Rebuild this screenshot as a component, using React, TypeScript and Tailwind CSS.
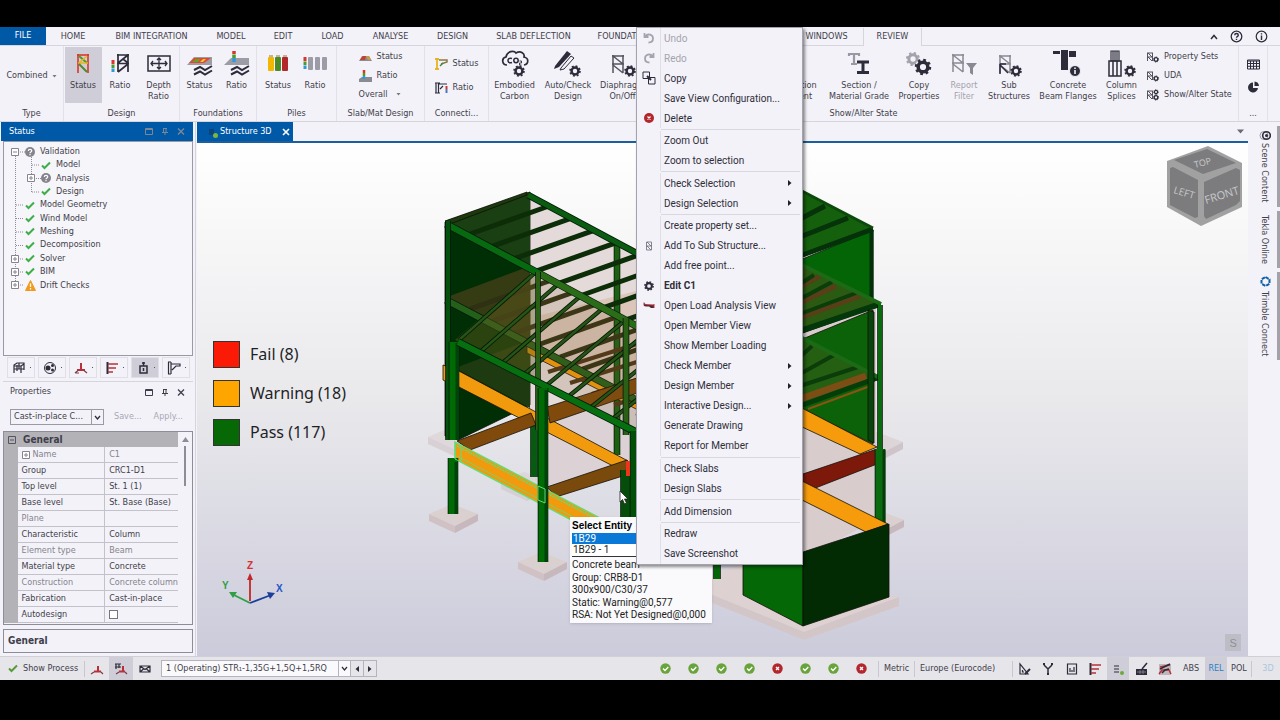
import React from "react";

const INK = "#2d2c3a";

function Gear({ x, y, s = 1, c = INK }: { x: number; y: number; s?: number; c?: string }) {
  return (
    <g transform={`translate(${x} ${y}) scale(${s})`} fill="none" stroke={c}>
      <circle r="3.6" strokeWidth="2.6" />
      <circle r="5.2" strokeWidth="1.8" strokeDasharray="2 2.084" />
    </g>
  );
}

function Svg({ w, h, children }: { w: number; h: number; children: React.ReactNode }) {
  return (
    <svg width={w} height={h} viewBox={`0 0 ${w} ${h}`} fill="none" stroke={INK} strokeWidth="1.5" aria-hidden="true" className="shrink-0">
      {children}
    </svg>
  );
}

const Truss = ({ x = 0, y = 0, c = INK }: { x?: number; y?: number; c?: string }) => (
  <path transform={`translate(${x} ${y})`} d="M1 0V18M11 0V18M0 1H12M0 9H12M1 1L11 9M1 10L11 18" stroke={c} />
);

const ICONS: Record<string, React.ReactNode> = {
  designStatus: (
    <Svg w={28} h={26}>
      <path d="M9 3V22M19 3V22" stroke="#d8362a" strokeWidth="1.600" />
      <path d="M8 4H20" stroke="#d8362a" strokeWidth="1.600" />
      <path d="M10 5L18 12" stroke="#4c9a2a" strokeWidth="2" />
      <path d="M18 5L10 12M9 12H19" stroke="#e8b51e" strokeWidth="1.600" />
      <path d="M10 13L18 21" stroke="#4c8a2a" strokeWidth="2" />
    </Svg>
  ),
  designRatio: (
    <Svg w={28} h={26}>
      <path d="M12 3V21M22 3V21M11 4H23M11 12.500H23M22 4L12 12M22 13L12 21M17 8L22 12" strokeWidth="1.700" />
      <path d="M7 9V13" stroke="#d8362a" strokeWidth="3" />
      <path d="M7 13.5V17" stroke="#4c9a2a" strokeWidth="3" />
      <path d="M7 17.5V21" stroke="#2f9ad8" strokeWidth="3" />
    </Svg>
  ),
  depth: (
    <Svg w={28} h={26}>
      <rect x="3" y="5" width="22" height="15" />
      <path d="M14 7V18M6 12.5H22M12 9L14 7L16 9M12 16L14 18L16 16M8 10L6 12.5L8 15M20 10L22 12.5L20 15" strokeWidth="1.3" />
    </Svg>
  ),
  fndStatus: (
    <Svg w={28} h={26}>
      <path d="M1 14L8 6H26V14Z" fill="#9c9ca6" stroke="none" />
      <path d="M3 12L8 7H25L18 12Z" fill="#dd4a2e" stroke="none" />
      <path d="M6 11L10 8H15L12 11Z" fill="#6aa028" stroke="none" />
      <path d="M14 11L17 8H20L17 11Z" fill="#f0c63a" stroke="none" />
      <path d="M8 19L14 16L19 19L26 15M8 23.500L14 20.500L19 23.500L26 19.500" strokeWidth="2" />
    </Svg>
  ),
  fndRatio: (
    <Svg w={28} h={26}>
      <path d="M1 14L8 7H26V14Z" fill="#9c9ca6" stroke="none" />
      <path d="M11 0V3" stroke="#d8362a" strokeWidth="3.500" />
      <path d="M11 3.500V7" stroke="#4c9a2a" strokeWidth="3.500" />
      <path d="M11 7V11" stroke="#2f9ad8" strokeWidth="3.500" />
      <path d="M8 19L14 16L19 19L26 15M8 23.500L14 20.500L19 23.500L26 19.500" strokeWidth="2" />
    </Svg>
  ),
  pileStatus: (
    <Svg w={28} h={26}>
      <rect x="4" y="6" width="6" height="14" rx="1" fill="#f2b705" stroke="none" />
      <rect x="11" y="6" width="6" height="14" rx="1" fill="#4a8a2a" stroke="none" />
      <rect x="18" y="6" width="6" height="14" rx="1" fill="#b3262b" stroke="none" />
      <path d="M5 5H9M12 5H16M19 5H23" stroke="#8b7a3a" strokeWidth="1" />
    </Svg>
  ),
  pileRatio: (
    <Svg w={28} h={26}>
      <path d="M4 6V10" stroke="#d8362a" strokeWidth="3" />
      <path d="M4 10.500V14" stroke="#4c9a2a" strokeWidth="3" />
      <path d="M4 14.500V18" stroke="#2f9ad8" strokeWidth="3" />
      <rect x="7" y="6" width="5" height="13" rx="1" fill="#9c9ca6" stroke="none" />
      <rect x="14" y="6" width="5" height="13" rx="1" fill="#9c9ca6" stroke="none" />
      <rect x="21" y="6" width="5" height="13" rx="1" fill="#9c9ca6" stroke="none" />
    </Svg>
  ),
  slabStatus: (
    <Svg w={14} h={12}>
      <path d="M0 10L3 5H10L13 10Z" fill="#8a8a92" stroke="none" />
      <path d="M1 9L4 5H7L6 9Z" fill="#c8402a" stroke="none" />
      <path d="M7 5L9 9L12 9L10 5Z" fill="#c89a4a" stroke="none" />
    </Svg>
  ),
  slabRatio: (
    <Svg w={14} h={12}>
      <path d="M0 12V9L3 7H13V12Z" fill="#8a8a92" stroke="none" />
      <path d="M5 0V3" stroke="#d8362a" strokeWidth="2.500" />
      <path d="M5 3V6" stroke="#4c9a2a" strokeWidth="2.500" />
      <path d="M5 6V9" stroke="#2f9ad8" strokeWidth="2.500" />
    </Svg>
  ),
  conStatus: (
    <Svg w={14} h={12}>
      <path d="M2 1V11M0 1H4M0 11H4" stroke="#e8b51e" strokeWidth="1.800" />
      <path d="M4 2H12V4L6 6" stroke="#8a7a4a" />
      <path d="M5 8L8 5" stroke="#3a8a3a" />
    </Svg>
  ),
  conRatio: (
    <Svg w={14} h={12}>
      <path d="M1 1V11M3.500 1V11M0 1H5M0 11H5M4 2H12M5 7L8 4" strokeWidth="1.200" />
      <path d="M11.500 4V7" stroke="#d8362a" strokeWidth="2" />
      <path d="M11.500 7V11" stroke="#4a7ab8" strokeWidth="2" />
    </Svg>
  ),
  carbon: (
    <Svg w={32} h={28}>
      <path d="M8 15C3 15 2 8 7 7C8 1 15 0 17 3C22 0 26 4 25 7C30 8 30 14 25 15" strokeWidth="1.700" />
      <path d="M13 8.500C10 7.500 9 9 9 10.500C9 12 10 13.500 13 12.500" strokeWidth="1.500" />
      <circle cx="17" cy="10.500" r="2.200" strokeWidth="1.500" />
      <path d="M20.500 11H22.500V13H20.500V15H22.500" strokeWidth="0.900" />
      <Gear x={20} y={21} s={0.95} />
    </Svg>
  ),
  autoCheck: (
    <Svg w={32} h={28}>
      <path d="M3 16L15 1L19 4L7 17L2 19Z" fill={INK} stroke="none" />
      <path d="M9 18L19 6L22 8L12 19L8 20Z" strokeWidth="1" fill="#f3f2f8" />
      <Gear x={23} y={21} s={0.95} />
    </Svg>
  ),
  diaphragm: (
    <Svg w={32} h={28}>
      <Truss x={5} y={5} c="#55545f" />
      <Gear x={23} y={21} s={0.95} />
    </Svg>
  ),
  section: (
    <Svg w={32} h={28}>
      <path d="M5 4H17M11 4V14M8 14H14M6 3V6M16 3V6" stroke="#9a99a3" strokeWidth="2.200" />
      <path d="M14 12H26M14 22.500H26M20 12V22" strokeWidth="3" />
    </Svg>
  ),
  copyProps: (
    <Svg w={32} h={28}>
      <Gear x={10} y={9} s={1.15} c="#a3a2ab" />
      <circle cx="20" cy="17" r="8" fill="#f3f2f8" stroke="none" />
      <Gear x={20} y={17} s={1.35} />
    </Svg>
  ),
  report: (
    <Svg w={32} h={28}>
      <Truss x={4} y={4} c="#8a8993" />
      <path d="M18 13H29L25 18V25L22 23V18Z" fill="#8a8993" stroke="none" />
    </Svg>
  ),
  sub: (
    <Svg w={32} h={28}>
      <Truss x={6} y={5} c="#8a8993" />
      <path d="M7 14V24M7 15L15 23M7 14H13" />
      <Gear x={23} y={21} s={0.95} />
    </Svg>
  ),
  flanges: (
    <Svg w={32} h={28}>
      <path d="M1 1H8V4H1ZM9 0H16V20H9ZM17 1H24V7H17Z" fill={INK} stroke="none" />
      <circle cx="23" cy="21" r="5.500" fill={INK} stroke="#f3f2f8" strokeWidth="1" />
      <path d="M23 20V24M23 17.500V19" stroke="#fff" strokeWidth="1.500" />
    </Svg>
  ),
  splices: (
    <Svg w={32} h={28}>
      <path d="M5 1H13V11H5ZM9 1V11M7 1V11M11 1V11" strokeWidth="1.200" />
      <path d="M3 11H15V26H3ZM7 11V26M11 11V26" strokeWidth="1.500" />
      <Gear x={24} y={21} s={0.95} />
    </Svg>
  ),
};

function MiniTruss({ double = false }: { double?: boolean }) {
  return (
    <Svg w={13} h={12}>
      <path d="M0.500 2V10M5.500 2V10M0 2H6M0 6H6M1 2L5 6M1 6L5 10" strokeWidth="1" stroke="#55545f" />
      {double && <Gear x={9} y={3} s={0.45} />}
      <Gear x={9} y={8.500} s={0.5} />
    </Svg>
  );
}

function Check({ className = "text-[#3fae49]" }: { className?: string }) {
  return (
    <svg width="10" height="9" viewBox="0 0 10 9" aria-hidden="true" className={`shrink-0 ${className}`}>
      <path d="M1 4.500L3.500 7L9 1.500" fill="none" stroke="currentColor" strokeWidth="2" />
    </svg>
  );
}

const TABS: [string, string][] = [
  ["HOME", "w-[54px]"], ["BIM INTEGRATION", "w-[103px]"], ["MODEL", "w-14"], ["EDIT", "w-12"], ["LOAD", "w-[51px]"],
  ["ANALYSE", "w-[65px]"], ["DESIGN", "w-[59px]"], ["SLAB DEFLECTION", "w-[103px]"], ["FOUNDATIONS", "w-[84px]"],
];

function Tabs() {
  return (
    <nav className="flex h-[19px] shrink-0 items-stretch border-b border-[#d6d5de] pt-px text-[9px]">
      <button className="-mt-px w-[46px] bg-[#0059a7] text-white">FILE</button>
      {TABS.map(([t, w]) => (
        <button key={t} className={`${w} whitespace-nowrap`}>{t}</button>
      ))}
      <div className="w-[121px]" />
      <button className="w-[73px]">WINDOWS</button>
      <button className="-mb-px w-[59px] border-x border-[#d6d5de] bg-[#f3f2f8]">REVIEW</button>
      <div className="ml-auto flex items-center gap-3 pr-3">
        <button aria-label="Collapse ribbon"><Svg w={8} h={6}><path d="M1 5L4 1.500L7 5" /></Svg></button>
        <button aria-label="Help">
          <Svg w={13} h={13}><circle cx="6.500" cy="6.500" r="5.300" strokeWidth="1.300" /><path d="M4.700 5.200C4.700 3 8.300 3 8.300 5.200C8.300 6.400 6.500 6.300 6.500 7.800M6.500 8.800V10" strokeWidth="1.400" /></Svg>
        </button>
        <button aria-label="About">
          <Svg w={13} h={13}><circle cx="6.500" cy="6.500" r="5.300" strokeWidth="1.200" /><path d="M6.500 5.500V10M6.500 3.200V4.500" strokeWidth="1.400" /></Svg>
        </button>
      </div>
    </nav>
  );
}

function Group({ label, w, children }: { label: string; w: string; children: React.ReactNode }) {
  return (
    <section className={`flex flex-col border-r border-[#e2e1ea] ${w}`}>
      <div className="flex h-[60px] justify-center pt-px">{children}</div>
      <h3 className="text-center leading-4 whitespace-nowrap">{label}</h3>
    </section>
  );
}

function Big({ icon, lines, w, active, dim }: { icon?: string; lines: string[]; w: string; active?: boolean; dim?: boolean }) {
  return (
    <button className={`flex h-14 shrink-0 flex-col items-center overflow-hidden ${w} ${active ? "bg-[#cfced8]" : ""} ${dim ? "text-[#a3a2ad]" : ""}`}>
      <span className="flex h-[33px] shrink-0 items-center justify-center">{icon && ICONS[icon]}</span>
      {lines.map((l) => (
        <span key={l} className="leading-[11px] whitespace-nowrap">{l}</span>
      ))}
    </button>
  );
}

function Small({ icon, label }: { icon?: React.ReactNode; label: string }) {
  return <button className="flex items-center gap-1 whitespace-nowrap">{icon}{label}</button>;
}

const Caret = () => <Svg w={5} h={3}><path d="M0.500 0H4.500L2.500 2.500Z" fill="#77767f" stroke="none" /></Svg>;

function Ribbon() {
  return (
    <div className="flex h-[76px] shrink-0 border-b border-[#d6d5de] text-[9px]">
      <Group label="Type" w="w-16">
        <button className="flex items-center gap-1">Combined <Caret /></button>
      </Group>
      <Group label="Design" w="w-[116px]">
        <Big icon="designStatus" lines={["Status"]} w="w-[37px]" active />
        <Big icon="designRatio" lines={["Ratio"]} w="w-[37px]" />
        <Big icon="depth" lines={["Depth", "Ratio"]} w="w-10" />
      </Group>
      <Group label="Foundations" w="w-[77px]">
        <Big icon="fndStatus" lines={["Status"]} w="w-[37px]" />
        <Big icon="fndRatio" lines={["Ratio"]} w="w-[37px]" />
      </Group>
      <Group label="Piles" w="w-20">
        <Big icon="pileStatus" lines={["Status"]} w="w-[37px]" />
        <Big icon="pileRatio" lines={["Ratio"]} w="w-[37px]" />
      </Group>
      <Group label="Slab/Mat Design" w="w-[88px]">
        <div className="flex flex-col justify-around pb-px">
          <Small icon={ICONS.slabStatus} label="Status" />
          <Small icon={ICONS.slabRatio} label="Ratio" />
          <button className="flex items-center gap-2">Overall <Caret /></button>
        </div>
      </Group>
      <Group label="Connecti..." w="w-16">
        <div className="flex flex-col justify-evenly">
          <Small icon={ICONS.conStatus} label="Status" />
          <Small icon={ICONS.conRatio} label="Ratio" />
        </div>
      </Group>
      <Group label="Show/Alter State" w="min-w-0 flex-1">
        <Big icon="carbon" lines={["Embodied", "Carbon"]} w="w-[51px]" />
        <Big icon="autoCheck" lines={["Auto/Check", "Design"]} w="w-14" />
        <Big icon="diaphragm" lines={["Diaphragm", "On/Off"]} w="w-[53px]" />
        <div className="flex-1" />
        <Big lines={["Deflection", "Content"]} w="w-[60px]" />
        <Big icon="section" lines={["Section /", "Material Grade"]} w="w-[66px]" />
        <Big icon="copyProps" lines={["Copy", "Properties"]} w="w-[54px]" />
        <Big icon="report" lines={["Report", "Filter"]} w="w-9" dim />
        <Big icon="sub" lines={["Sub", "Structures"]} w="w-[54px]" />
        <Big icon="flanges" lines={["Concrete", "Beam Flanges"]} w="w-16" />
        <Big icon="splices" lines={["Column", "Splices"]} w="w-[43px]" />
        <div className="flex w-[95px] flex-col justify-around pb-px pl-1">
          <Small icon={<MiniTruss />} label="Property Sets" />
          <Small icon={<MiniTruss />} label="UDA" />
          <Small icon={<MiniTruss double />} label="Show/Alter State" />
        </div>
      </Group>
      <Group label="..." w="mr-3 w-[29px]">
        <div className="flex flex-col justify-evenly">
          <button aria-label="Table">
            <Svg w={13} h={11}><path d="M0.500 1H12.500V10H0.500ZM0.500 2H12.500M0.500 4.500H12.500M0.500 7.300H12.500M3.500 2V10M6.500 2V10M9.500 2V10" strokeWidth="1" /></Svg>
          </button>
          <button aria-label="Chart">
            <Svg w={13} h={12}><path d="M6 1.500A5 5 0 1 0 11 7H6Z" fill={INK} stroke="none" /><path d="M7.500 0.500A5 5 0 0 1 12 5H7.500Z" fill={INK} stroke="none" /></Svg>
          </button>
        </div>
      </Group>
    </div>
  );
}

type Node = { t: string; d?: number; box?: string; i: "q" | "c" | "w" };
const TREE: Node[] = [
  { t: "Validation", box: "-", i: "q" }, { t: "Model", d: 1, i: "c" }, { t: "Analysis", d: 1, box: "+", i: "q" }, { t: "Design", d: 1, i: "c" },
  { t: "Model Geometry", i: "c" }, { t: "Wind Model", i: "c" }, { t: "Meshing", i: "c" }, { t: "Decomposition", i: "c" },
  { t: "Solver", box: "+", i: "c" }, { t: "BIM", box: "+", i: "c" }, { t: "Drift Checks", box: "+", i: "w" },
];

function ExpandBox({ sign }: { sign: string }) {
  return (
    <svg width="8" height="8" viewBox="0 0 8 8" aria-hidden="true" className="shrink-0">
      <path d={sign === "+" ? "M0.500 0.500H7.500V7.500H0.500ZM2 4H6M4 2V6" : "M0.500 0.500H7.500V7.500H0.500ZM2 4H6"} fill="#fff" stroke="#85848f" />
    </svg>
  );
}

function WindowButtons({ tone }: { tone: string }) {
  return (
    <div className={`flex items-center gap-2 ${tone}`}>
      <button aria-label="Maximise"><svg width="8" height="7" className="block"><path d="M0.500 0.500H7.500V6.500H0.500ZM0 1.500H8" fill="none" stroke="currentColor" /></svg></button>
      <button aria-label="Pin"><svg width="8" height="7" className="block"><path d="M2.500 0V4M5 0V4M1 4.500H7M4 4V7M2 0.500H6" fill="none" stroke="currentColor" /></svg></button>
      <button aria-label="Close"><svg width="8" height="7" className="block"><path d="M1 0.500L7 6.500M7 0.500L1 6.500" fill="none" stroke="currentColor" strokeWidth="1.300" /></svg></button>
    </div>
  );
}

const BOTTOM_TOOLS: { n: string; on?: boolean; g: React.ReactNode }[] = [
  { n: "Structure", g: <path d="M2 12V4L5 2H12V9M2 5H9V12M5 4V10M9 5L12 3M2 8H12M7 2V8" strokeWidth="1.200" /> },
  { n: "Groups", g: <><circle cx="7" cy="7" r="5.500" strokeWidth="1" /><circle cx="5" cy="7" r="2.500" fill={INK} stroke="none" /><circle cx="9.500" cy="4.500" r="1.500" fill={INK} stroke="none" /><circle cx="9.500" cy="9" r="1.500" fill={INK} stroke="none" /></> },
  { n: "Loading", g: <><path d="M3 9H11M7 2V8" stroke="#b8303a" strokeWidth="2" /><path d="M1 12L4 9.500M10 9.500L13 12M1 12H5" stroke="#7a4048" strokeWidth="1.200" /></> },
  { n: "Wind", g: <><path d="M2.500 1V13" strokeWidth="2" /><path d="M3 3H13M3 7H11M3 11H8" stroke="#b8303a" strokeWidth="1.400" /></> },
  { n: "Status", on: true, g: <><path d="M4 5H11V12H4Z" /><path d="M7.500 1V5M6 2H9M7.500 7V10" /></> },
  { n: "Connections", g: <path d="M1.500 1V13M4 1V13M1 1H4M1 13H4M4 3H13V5H9L5 9" strokeWidth="1.200" /> },
];

const PROPS: [string, string, boolean][] = [
  ["Name", "C1", true], ["Group", "CRC1-D1", false], ["Top level", "St. 1 (1)", false], ["Base level", "St. Base (Base)", false],
  ["Plane", "", true], ["Characteristic", "Column", false], ["Element type", "Beam", true], ["Material type", "Concrete", false],
  ["Construction", "Concrete column", true], ["Fabrication", "Cast-in-place", false], ["Autodesign", "", false],
];

function LeftPanel() {
  return (
    <aside className="flex w-[196px] shrink-0 flex-col border-r border-[#d6d5de] pr-0.5 pl-[3px] text-[9px]">
      <div className="-ml-0.5 flex h-[19px] items-center justify-between bg-[#0059a7] pr-2 pl-2 text-white">
        <h2>Status</h2>
        <WindowButtons tone="text-[#7e8796]" />
      </div>
      <div className="h-[215px] border border-[#9a99a5] bg-[#f6f5fa] pt-[3px]">
        <ul className="relative grid h-[147px] auto-rows-fr">
          <svg width="40" height="147" className="absolute top-0 left-0" aria-hidden="true">
            <path d="M11.500 7V140M27.500 12V47M12 7H22M28 20H36M28 33.500H38M28 47H36M12 60H20M12 73.500H20M12 87H20M12 100.500H20M12 114H20M12 127H20M12 140H20" fill="none" stroke="#8d8c98" strokeDasharray="1 1" />
          </svg>
          {TREE.map((n) => (
            <li key={n.t} className={`relative flex items-center whitespace-nowrap ${n.d ? "pl-[23px]" : "pl-[7px]"}`}>
              <span className="flex w-[14px] shrink-0">{n.box && <ExpandBox sign={n.box} />}</span>
              <span className="flex w-[15px] shrink-0">
                {n.i === "c" && <Check />}
                {n.i === "q" && (
                  <svg width="10" height="10" viewBox="0 0 10 10" aria-hidden="true"><circle cx="5" cy="5" r="5" fill="#85848c" /><path d="M3.300 4C3.300 1.800 6.700 1.800 6.700 4C6.700 5 5 5 5 6.200M5 7V8.300" fill="none" stroke="#fff" strokeWidth="1.200" /></svg>
                )}
                {n.i === "w" && (
                  <svg width="11" height="11" viewBox="0 0 11 11" aria-hidden="true"><path d="M5.500 0.500L10.500 10.500H0.500Z" fill="#f39a1d" stroke="#f39a1d" strokeLinejoin="round" /><path d="M5.500 3.500V7M5.500 8V9.500" stroke="#fff" strokeWidth="1.300" /></svg>
                )}
              </span>
              {n.t}
            </li>
          ))}
        </ul>
      </div>
      <div className="flex h-[26px] items-start gap-[3px] border-b border-[#d6d5de] pt-px pl-1">
        {BOTTOM_TOOLS.map((b) => (
          <button key={b.n} aria-label={b.n} className={`flex h-[21px] w-7 items-center justify-center gap-1 border border-[#e0dfe8] ${b.on ? "bg-[#cfced8]" : ""}`}>
            <Svg w={14} h={14}>{b.g}</Svg>
            <span className="size-px bg-[#55545f]" />
          </button>
        ))}
      </div>
      <div className="flex h-5 items-center justify-between pr-2 pl-[7px]">
        <h2>Properties</h2>
        <WindowButtons tone="text-[#3f3e4b]" />
      </div>
      <div className="flex items-center pt-[7px] pb-[6px] pl-[7px]">
        <div className="flex h-4 w-[94px] shrink-0 border border-[#9a99a5]">
          <select aria-label="Property set" className="min-w-0 flex-1 appearance-none truncate bg-transparent pl-[3px]"><option>Cast-in-place C...</option></select>
          <span className="flex w-3 items-center justify-center border-l border-[#9a99a5]"><Svg w={7} h={5}><path d="M1 1L3.500 4L6 1" strokeWidth="1.300" /></Svg></span>
        </div>
        <button className="ml-[10px] text-[#a9a8b3]">Save...</button>
        <button className="ml-3 text-[#a9a8b3]">Apply...</button>
      </div>
      <div className="flex h-[194px] overflow-hidden border border-[#8d8c98]">
        <table className="h-[191px] flex-1 table-fixed border-collapse leading-[11px]">
          <tbody>
            <tr className="bg-[#b3b2b6]">
              <th colSpan={3} className="p-0 pt-px text-left text-[10px]"><span className="flex items-center gap-[7px] pl-1"><svg width="8" height="8"><path d="M0.500 0.500H7.500V7.500H0.500ZM2 4H6" fill="none" stroke="#55545f" /></svg>General</span></th>
            </tr>
            {PROPS.map(([k, v, dim]) => (
              <tr key={k} className={dim ? "text-[#85848f]" : ""}>
                <td className="w-[14px] bg-[#b3b2b6] p-0" />
                <th scope="row" className="w-[88px] border-r border-b border-[#c3c2ca] p-0 pt-px pl-1 text-left font-normal">
                  <span className="flex items-center gap-[3px]">{k === "Name" && <ExpandBox sign="+" />}{k}</span>
                </th>
                <td className="border-b border-[#c3c2ca] p-0 pt-px pl-1 whitespace-nowrap">
                  {k === "Autodesign" ? <input type="checkbox" aria-label="Autodesign" className="block size-[9px] appearance-none border border-[#77767f] bg-white" /> : v}
                </td>
              </tr>
            ))}
          </tbody>
        </table>
        <div className="flex w-[14px] shrink-0 flex-col items-center gap-1 pt-[5px]">
          <svg width="7" height="5"><path d="M0 5L3.500 0L7 5Z" fill="#8d8c98" /></svg>
          <div className="h-10 w-0.5 bg-[#8d8c98]" />
        </div>
      </div>
      <div className="mt-1 h-6 border border-[#8d8c98] px-1 pt-[5px] text-[10px] leading-3 font-bold">General</div>
    </aside>
  );
}

const O = "#120f08";

function Poly({ p, f, s = O, o = 1, w = 0.8 }: { p: string; f: string; s?: string; o?: number; w?: number }) {
  return <polygon points={p} fill={f} stroke={s} strokeWidth={w} opacity={o} />;
}

function Bar({ a, b, w, f }: { a: [number, number]; b: [number, number]; w: number; f: string }) {
  return (
    <>
      <line x1={a[0]} y1={a[1]} x2={b[0]} y2={b[1]} stroke="#04180a" strokeWidth={w + 1.6} />
      <line x1={a[0]} y1={a[1]} x2={b[0]} y2={b[1]} stroke={f} strokeWidth={w} />
    </>
  );
}

function Footing({ x, y, o = 1 }: { x: number; y: number; o?: number }) {
  return (
    <g opacity={o}>
      <path d={`M${x - 24} ${y}L${x - 1} ${y - 10}L${x + 25} ${y}L${x + 2} ${y + 12}Z`} fill="#dbd0d0" />
      <path d={`M${x - 24} ${y}L${x + 2} ${y + 12}V${y + 19}L${x - 24} ${y + 7}Z`} fill="#cfc1c4" />
      <path d={`M${x + 2} ${y + 12}L${x + 25} ${y}V${y + 7}L${x + 2} ${y + 19}Z`} fill="#c6b8bd" />
    </g>
  );
}

function Model() {
  const range = (n: number) => Array.from({ length: n }, (_, i) => i);
  return (
    <svg width="1051" height="512" viewBox="197 143 1051 512" className="block" role="img" aria-label="Structure 3D model">
      <Footing x={452} y={437} o={0.55} />
      <Footing x={525} y={482} o={0.5} />
      <Footing x={608} y={352} o={0.3} />
      <Footing x={604} y={455} o={0.4} />
      <Footing x={453} y={514} />
      <Footing x={542} y={562} />
      <Footing x={878} y={442} o={0.7} />
      <Footing x={879} y={520} />

      <Poly p="528,194 640,255 640,430 530,410" f="#e4dad9" s="none" />
      <Poly p="541,315 640,290 640,400 541,345" f="#dcc6ba" s="none" />
      <Poly p="535,412 640,380 640,470 560,496 535,480" f="#dcd2d5" s="none" />
      <Poly p="445,222 530,192 530,405 458,440 445,436" f="#012f05" />
      <Poly p="445,221 530,192 530,268" f="#1a3f12" s="none" />
      <Poly p="447,297 530,266 530,340" f="#353b13" s="none" />
      <Poly p="455,368 530,340 530,408" f="#1e3a10" s="none" />

      <Bar a={[534, 424]} b={[534, 477]} w={6} f="#075b10" />
      <Bar a={[617, 242]} b={[617, 455]} w={5} f="#1c6112" />
      <Poly p="527,344 640,401 640,411 527,353" f="#f59b0c" />
      {range(6).map((i) => (
        <line key={i} x1={470 + i * 22.5} y1={309 + i * 12} x2={549 + i * 22.5} y2={281 + i * 12} stroke="#2f3014" strokeWidth="5" />
      ))}
      {range(5).map((i) => (
        <line key={i} x1={548 + i * 22} y1={372 + i * 11} x2={640} y2={343 + i * 18} stroke="#4c3517" strokeWidth="4" />
      ))}
      <Bar a={[446, 300]} b={[640, 402]} w={6} f="#23601a" />
      {range(8).map((i) => (
        <line key={i} x1={470 + i * 22.5} y1={234 + i * 12.2} x2={549 + i * 22.5} y2={206 + i * 12.2} stroke="#0c2d08" strokeWidth="5" />
      ))}
      <Bar a={[528, 195]} b={[640, 255]} w={5} f="#0a5c10" />
      <Poly p="445,221 527,192 527,195 450,224" f="#1b3b0f" />

      <Poly p="443,365 457,370 457,387 443,380" f="#f59b0c" />
      <Poly p="457,370 628,461 613,466 457,386" f="#f29a0d" />
      <Poly p="547,407 640,377 640,392 550,423" f="#7f4a0b" />
      <Poly p="457,441 531,413 536,425 470,450" f="#7f4a0b" />
      <Poly p="547,487 627,460 626,475 556,497" f="#7a4a0c" />

      <Poly p="535,270 640,327 640,434 455,340" f="#7a5a28" s="none" o={0.16} />
      <Poly p="535,270 535,382 455,340" f="#5a5f1c" s="none" o={0.32} />
      {range(8).map((i) => (
        <Bar key={i} a={[537 + i * 22.3, 271 + i * 12.1]} b={[459 + i * 22, 340 + i * 11.2]} w={2.6} f="#265415" />
      ))}
      <Bar a={[446, 224]} b={[540, 274]} w={6} f="#086a10" />
      <Bar a={[540, 274]} b={[640, 328]} w={6} f="#2a6c18" />
      <Bar a={[538, 272]} b={[538, 430]} w={4} f="#2a6016" />
      <Bar a={[626, 318]} b={[626, 435]} w={5} f="#2a6016" />
      <Bar a={[448, 221]} b={[448, 440]} w={4} f="#04500c" />
      <Bar a={[626, 470]} b={[626, 530]} w={10} f="#064d0b" />

      <Poly p="455,442 640,539 640,556 455,459" f="#f29a0d" s="#63dd78" w={1.4} />
      <path d="M457 446L640 542" stroke="#63dd78" strokeWidth="1.500" fill="none" strokeDasharray="2 1" />
      <path d="M457 456L640 552" stroke="#63dd78" strokeWidth="0.800" fill="none" />
      <Bar a={[454, 342]} b={[454, 440]} w={9} f="#006a04" />
      <Bar a={[453, 458]} b={[453, 514]} w={9} f="#006a04" />
      <path d="M457 343V440M456 462V514" stroke="#01420a" strokeWidth="3" />
      <Bar a={[458, 342]} b={[640, 434]} w={6} f="#067010" />
      <Bar a={[543, 388]} b={[543, 562]} w={9} f="#006a04" />
      <path d="M546 390V562" stroke="#01420a" strokeWidth="3" />
      <path d="M538 486V500L545 503V489Z" stroke="#63dd78" fill="none" />
      <path d="M455 442V459L461 462V446Z" stroke="#63dd78" fill="none" />
      <Bar a={[634, 431]} b={[634, 530]} w={7} f="#025008" />
      <path d="M628 461V476" stroke="#f0341c" strokeWidth="4" />

      <Poly p="800,272 876,305 876,520 800,560" f="#d8cccd" s="none" />
      <Poly p="800,190 873,228 800,257" f="#15600d" />
      <path d="M800 219L825 206M800 237L848 218" stroke="#06330a" strokeWidth="5" />
      <Poly p="800,260 873,230 873,301 800,266" f="#036505" />
      <path d="M800 256L873 229" stroke="#04300a" strokeWidth="5" />
      <path d="M800 190L873 228" stroke="#0b4a0c" strokeWidth="3" />
      <path d="M871.500 230V302" stroke="#02300a" strokeWidth="4" />
      <Poly p="800,340 873,310 873,444 800,408" f="#0c6208" />
      <Poly p="800,264 881,305 800,334" f="#2b5b13" />
      <path d="M800 287L820 276M800 303L836 286M800 318L860 296" stroke="#583f17" strokeWidth="5" />
      <path d="M800 284L814 275M800 299L832 282M800 314L856 293" stroke="#0b3d0b" strokeWidth="4" />
      <path d="M800 331L880 304" stroke="#04380a" strokeWidth="6" />
      <path d="M800 264L881 304" stroke="#1d6a16" strokeWidth="4" />
      <Poly p="800,337 880,379 800,406" f="#245f12" />
      <path d="M800 357L812 346M800 374L834 355M800 386L858 367" stroke="#0b3d0b" strokeWidth="4" />
      <path d="M800 399L866 376" stroke="#7c4d14" strokeWidth="7" />
      <path d="M800 406L877 378" stroke="#043d0a" strokeWidth="5" />
      <path d="M800 337L880 378" stroke="#1d6a16" strokeWidth="4" />
      <path d="M808 409L873 385" stroke="#8b5313" strokeWidth="2" />
      <Poly p="800,407 877,447 860,454 800,426" f="#f59b0c" />
      <Poly p="800,475 877,449 877,464 800,494" f="#7d190b" />
      <Poly p="868,310 874,312 874,443 868,440" f="#09450a" />
      <Bar a={[880, 305]} b={[880, 450]} w={4} f="#0b6a10" />
      <Bar a={[880, 449]} b={[880, 526]} w={9} f="#0a6a10" />
      <path d="M884 450V524" stroke="#033d08" strokeWidth="3" />
      <Poly p="800,480 888,524 866,532 800,499" f="#f59b0c" />
      <Poly p="700,580 743,563 889,597 899,596 899,606 804,640 700,588" f="#ddd1d1" s="none" />
      <path d="M700 590L804 632L899 597V606L804 640L700 598Z" fill="#d3c6c8" />
      <Poly p="743,540 803,552 803,626 743,595" f="#036805" />
      <Poly p="803,552 889,524 889,597 803,626" f="#022b04" />
      <Bar a={[717, 540]} b={[717, 579]} w={6} f="#056509" />

      <g strokeWidth="1.800" fill="none">
        <path d="M250 601V577" stroke="#c02828" /><path d="M250 603L232 594" stroke="#2ea043" /><path d="M250 603L271 595" stroke="#1c3f9c" />
      </g>
      <path d="M247 580L250 573L253 580Z" fill="#c02828" />
      <path d="M229 592L237 592L233 598Z" fill="#2ea043" />
      <path d="M275 593L267 592L270 599Z" fill="#1c3f9c" />
      <g fontFamily="'Liberation Sans', sans-serif" fontSize="10" fontWeight="bold">
        <text x="247" y="569" fill="#d83030">Z</text>
        <text x="222" y="589" fill="#2ea043">Y</text>
        <text x="276" y="592" fill="#2456c8">X</text>
      </g>

      <path d="M1208 146L1242 163V207L1201 226L1167 207V161Z" fill="#a1a1a2" />
      <path d="M1207 149L1236 163L1203 174L1174 160Z" fill="#7c7c7e" />
      <path d="M1170 168L1173 167L1198 180V217L1195 218L1170 205Z" fill="#7c7c7e" />
      <path d="M1204 182L1236 168L1240 170V201L1236 205L1206 219L1204 216Z" fill="#7c7c7e" />
      <g fill="#c9c9cb" fontFamily="'Open Sans', sans-serif" fontSize="11">
        <text x="1195" y="168" fontSize="9" transform="rotate(-14 1195 168)">TOP</text>
        <text x="1173" y="193" fontSize="10" transform="rotate(16 1173 193)">LEFT</text>
        <text x="1206" y="204" transform="rotate(-17 1206 204)">FRONT</text>
      </g>
      <rect x="1225" y="634" width="16" height="17" fill="#bdbdc6" />
      <text x="1229.500" y="647" fontFamily="'Liberation Sans', sans-serif" fontSize="11" fill="#8f8f9b">S</text>
    </svg>
  );
}

const LEGEND: [string, string][] = [["Fail (8)", "bg-[#fb1a05]"], ["Warning (18)", "bg-[#ffa500]"], ["Pass (117)", "bg-[#066906]"]];

function EntityTip() {
  return (
    <div className="absolute top-[374px] left-[373px] w-[142px] bg-[#fafafc] px-0.5 pt-0.5 pb-px font-['Roboto',sans-serif] text-[10px] leading-[12.500px] text-[#222] shadow-sm">
      <h3 className="font-['Liberation_Sans',sans-serif] text-[10px] leading-[13px] font-bold text-black">Select Entity</h3>
      <ul className="border-b border-[#333] leading-[11px] whitespace-nowrap">
        <li className="mt-px bg-[#0a78d6] px-px text-white">1B29</li>
        <li className="bg-white px-px pb-px">1B29 - 1</li>
      </ul>
      <div className="mt-[2px] whitespace-nowrap">
        <p>Concrete beam</p><p>Group: CRB8-D1</p><p>300x900/C30/37</p><p>Static: Warning@0,577</p><p>RSA: Not Yet Designed@0,000</p>
      </div>
    </div>
  );
}

function Viewport() {
  return (
    <main className="flex min-w-0 flex-1 flex-col pl-px">
      <div className="flex h-[19px] shrink-0 items-center justify-between">
        <div className="flex h-full items-center bg-[#0059a7] pr-[3px] pl-2 text-[9px] text-white">
          <svg width="15" height="12" aria-hidden="true"><path d="M4 3H9V9H4Z" fill="#0d447c" /><circle cx="10.500" cy="9.500" r="2.500" fill="#7cb63a" /></svg>
          Structure 3D
          <button aria-label="Close tab" className="ml-2.5"><svg width="8" height="8" className="block"><path d="M1 1L7 7M7 1L1 7" stroke="#fff" strokeWidth="1.600" /></svg></button>
        </div>
        <button aria-label="Open views" className="mr-1"><svg width="7" height="5" className="block"><path d="M0 0.500H7L3.500 4.500Z" fill="#6a6975" /></svg></button>
      </div>
      <div className="relative min-h-0 flex-1 overflow-hidden border-t-2 border-[#1c5f9c] bg-linear-to-b from-white via-[#e9e9ec] to-[#cccbdb]">
        <Model />
        <ul className="absolute top-[198px] left-4 flex flex-col gap-3 font-['Noto_Sans',sans-serif] text-[16px] text-[#1f1f28]">
          {LEGEND.map(([t, c]) => (
            <li key={t} className="flex items-center gap-[10px]">
              <span className={`size-[27px] border border-[#333] ${c}`} />
              <span className="leading-[27px]">{t}</span>
            </li>
          ))}
        </ul>
        <EntityTip />
        <svg width="10" height="15" viewBox="0 0 10 15" className="absolute top-[347px] left-[422px]" aria-hidden="true"><path d="M1 1V12L3.500 9.500L5.500 14L7.500 13L5.500 9H9Z" fill="#fff" stroke="#222" strokeWidth="0.800" /></svg>
      </div>
    </main>
  );
}

function SideTabs() {
  const tab = "flex items-center border-r-[3px] border-[#a3a2a8] pr-1 [writing-mode:vertical-rl] whitespace-nowrap leading-4";
  return (
    <nav className="flex w-8 shrink-0 flex-col items-end gap-1 pt-1 text-[9px]">
      <button className={`${tab} h-[81px] justify-start gap-0.5 pt-1`}>
        <svg width="12" height="11" className="shrink-0"><circle cx="5" cy="5.500" r="4" fill="none" stroke="#9a99a5" /><circle cx="7.500" cy="5.500" r="3.800" fill="none" stroke={INK} strokeWidth="1.600" /><circle cx="7.500" cy="5.500" r="1.500" fill={INK} /></svg>
        Scene Content
      </button>
      <button className={`${tab} h-[57px] justify-center`}>Tekla Online</button>
      <button className={`${tab} h-[88px] justify-start gap-1 pt-1`}>
        <svg width="11" height="11" className="shrink-0"><path d="M5.500 1L9.500 3.300V7.700L5.500 10L1.500 7.700V3.300Z" fill="none" stroke="#0f5fa8" strokeWidth="2" strokeDasharray="3.600 1" /></svg>
        Trimble Connect
      </button>
    </nav>
  );
}

type Item = { t: string; i?: string; dim?: boolean; bold?: boolean; sub?: boolean };
const MENU: Item[][] = [
  [{ t: "Undo", i: "undo", dim: true }, { t: "Redo", i: "redo", dim: true }, { t: "Copy", i: "copy" }, { t: "Save View Configuration..." }, { t: "Delete", i: "del" }],
  [{ t: "Zoom Out" }, { t: "Zoom to selection" }],
  [{ t: "Check Selection", sub: true }, { t: "Design Selection", sub: true }],
  [
    { t: "Create property set..." }, { t: "Add To Sub Structure...", i: "subs" }, { t: "Add free point..." }, { t: "Edit C1", i: "gear", bold: true },
    { t: "Open Load Analysis View", i: "load" }, { t: "Open Member View" }, { t: "Show Member Loading" }, { t: "Check Member", sub: true },
    { t: "Design Member", sub: true }, { t: "Interactive Design...", sub: true }, { t: "Generate Drawing" }, { t: "Report for Member" },
  ],
  [{ t: "Check Slabs" }, { t: "Design Slabs" }],
  [{ t: "Add Dimension" }],
  [{ t: "Redraw" }, { t: "Save Screenshot" }],
];

const MENU_ICONS: Record<string, React.ReactNode> = {
  undo: <path d="M2.500 2V6H6.500M3 5.500C6 2 11 3.500 11 7.500C11 10 9 11.500 6.500 11.500" stroke="#a5a4ae" strokeWidth="1.800" />,
  redo: <path d="M11.500 2V6H7.500M11 5.500C8 2 3 3.500 3 7.500C3 10 5 11.500 7.500 11.500" stroke="#a5a4ae" strokeWidth="1.800" />,
  copy: <><path d="M1 1H7.500V7.500H1ZM6.500 6.500H13V13H6.500Z" strokeWidth="1" /><path d="M5 5L9 9" strokeWidth="2" /></>,
  del: <><circle cx="7" cy="7" r="5" fill="#b3262b" stroke="none" /><path d="M5.500 5.500L8.500 8.500M8.500 5.500L5.500 8.500" stroke="#fff" strokeWidth="1.200" /></>,
  subs: <path d="M4.500 3H9.500V11H4.500ZM4.500 7H9.500M5 3L9 7M5 7L9 11" strokeWidth="0.800" stroke="#6a6975" />,
  gear: <Gear x={7} y={7} s={0.8} />,
  load: <><path d="M2 4L5 6H12V9H9L7 7.500H4L2 7Z" fill="#4a2a35" stroke="none" /><path d="M2 3.500V6.500M3 5.500L12 6M12 5V9" stroke="#c0323c" strokeWidth="1" /></>,
};

function ContextMenu() {
  return (
    <div role="menu" className="absolute top-[27px] left-[636px] flex h-[538px] w-[167px] flex-col justify-between border border-[#a3a2ad] bg-[#f3f2f8] font-['Roboto',sans-serif] text-[10px] text-[#2f2e3a] shadow-[2px_2px_3px_rgba(0,0,0,0.45)]">
      {MENU.map((sec, k) => (
        <React.Fragment key={sec[0].t}>
          {k > 0 && <hr className="mr-0.5 ml-6 border-[#d9d8e1]" />}
          <div>
            {sec.map((m) => (
              <button key={m.t} role="menuitem" className={`flex h-5 w-full items-center text-left ${m.dim ? "text-[#a5a4ae]" : ""} ${m.bold ? "font-bold" : ""}`}>
                <span className="flex h-5 w-6 shrink-0 items-center justify-center border-r border-[#e0dfe8]">{m.i && <Svg w={14} h={14}>{MENU_ICONS[m.i]}</Svg>}</span>
                <span className="flex-1 pl-[3px] whitespace-nowrap">{m.t}</span>
                {m.sub && <svg width="4" height="8" className="mr-2.5" aria-hidden="true"><path d="M0 1L3.500 4L0 7Z" fill="#222" /></svg>}
              </button>
            ))}
          </div>
        </React.Fragment>
      ))}
    </div>
  );
}

const Sep = () => <span className="h-4 w-px shrink-0 bg-[#c9c8d2]" />;

const STATUS_TOOLS: { n: string; on?: boolean; g: React.ReactNode }[] = [
  { n: "Slope", g: <><path d="M2 2V12H10L2 2ZM4.500 8V10H6" strokeWidth="1.200" /><path d="M7 12L12 7" strokeWidth="2" /></> },
  { n: "Branch", g: <><path d="M3 3L7 7L11 3M7 7V12" /><path d="M2 1H4V3H2ZM10 1H12V3H10ZM6 11H8V13H6Z" fill={INK} stroke="none" /></> },
  { n: "Report", g: <path d="M2.500 2H11.500V12H2.500ZM5 6V10M7 8V10M9 5V10" strokeWidth="1.200" /> },
  { n: "Loads", g: <><path d="M2.500 1V13" strokeWidth="2" /><path d="M3 3H13M3 7H11M3 11H8" stroke="#b8303a" strokeWidth="1.300" /></> },
  { n: "Levels", on: true, g: <><path d="M3 4H8M3 7H8M3 10H8" strokeWidth="1.200" /><circle cx="11" cy="11" r="2" fill="#6fa83a" stroke="none" /></> },
  { n: "Grid", g: <><path d="M1 7H12V13H1Z" fill={INK} stroke="none" /><path d="M2 10H11M5 8V12M8 8V12" stroke="#9a99a5" strokeWidth="0.700" /><path d="M7 7L12 1" strokeWidth="1.500" /></> },
  { n: "Results", g: <><rect x="1" y="2" width="12" height="11" fill="#bfb6ba" stroke="none" /><path d="M1 12L4 8H11L13 12M2 5L12 3" stroke="#b8303a" /><path d="M2 7L6 5L12 2M4 11L7 8L11 7" /></> },
];

function StatusBar() {
  return (
    <footer className="flex h-6 shrink-0 items-center border-t border-[#d0cfd8] bg-[#e6e5ea] text-[9px] whitespace-nowrap">
      <span className="flex w-[84px] items-center gap-[5px] pl-2"><Check className="text-[#5a9a3a]" />Show Process</span>
      <Sep />
      <button aria-label="Loading" className="flex w-6 justify-center"><Svg w={14} h={14}><path d="M4 9.500H11M8 4V9" stroke="#b8303a" strokeWidth="2" /><path d="M1 12L4 10M11 10L13 12" stroke="#7a4048" strokeWidth="1.200" /></Svg></button>
      <button aria-label="Loading summary" className="flex h-full w-6 items-center justify-center bg-[#cfced8]"><Svg w={14} h={14}><path d="M1 2H7M2 2V7M5 2V6M1 5H7" strokeWidth="1.200" /><path d="M5 9.500H11M9 4V9" stroke="#b8303a" strokeWidth="2" /><path d="M2 12L5 10M11 10L13 12" stroke="#7a4048" strokeWidth="1.200" /></Svg></button>
      <button aria-label="Envelope" className="flex w-6 justify-center"><Svg w={12} h={12}><path d="M1 3H11V9H1ZM1 3L6 6.500L11 3M1 9L4.500 6M11 9L7.500 6" strokeWidth="1.200" /></Svg></button>
      <div className="ml-1 flex h-[17px] w-[190px] border border-[#b5b4be] bg-[#fafafd]">
        <select aria-label="Load combination" className="min-w-0 flex-1 appearance-none bg-transparent pl-1"><option>1 (Operating) STR₁-1,35G+1,5Q+1,5RQ</option></select>
        <span className="flex w-3 items-center justify-center border-l border-[#b5b4be]"><Svg w={7} h={5}><path d="M1 1L3.500 4L6 1" strokeWidth="1.200" /></Svg></span>
      </div>
      <button aria-label="Previous" className="flex h-[17px] w-[13px] items-center justify-center border-y border-r border-[#b5b4be]"><Svg w={4} h={6}><path d="M4 0V6L0.500 3Z" fill={INK} stroke="none" /></Svg></button>
      <button aria-label="Next" className="flex h-[17px] w-[13px] items-center justify-center border-y border-r border-[#b5b4be]"><Svg w={4} h={6}><path d="M0 0V6L3.500 3Z" fill={INK} stroke="none" /></Svg></button>

      <div className="ml-auto grid w-[223px] grid-cols-8 justify-items-center">
        {[1, 1, 1, 1, 0, 1, 1, 0].map((ok, i) => (
          <svg key={i} width="11" height="11" viewBox="0 0 11 11" aria-hidden="true">
            <circle cx="5.500" cy="5.500" r="5.200" fill={ok ? "#69a33c" : "#b3262b"} />
            <path d={ok ? "M3 5.500L5 7.500L8.300 4" : "M4 4L7 7M7 4L4 7"} fill="none" stroke="#fff" strokeWidth="1.300" />
          </svg>
        ))}
      </div>
      <span className="w-[3px]" /><Sep />
      <span className="w-[35px] text-center">Metric</span><Sep />
      <span className="w-[97px] pl-[5px]">Europe (Eurocode)</span><Sep />
      <div className="flex h-full w-[164px] items-center justify-around">
        {STATUS_TOOLS.map((t) => (
          <button key={t.n} aria-label={t.n} className={`flex h-full w-[22px] items-center justify-center ${t.on ? "bg-[#cfced8]" : ""}`}><Svg w={14} h={14}>{t.g}</Svg></button>
        ))}
      </div>
      <button className="w-7">ABS</button>
      <button className="h-full w-[22px] bg-[#cfced8] text-[#2a7fc8]">REL</button>
      <button className="w-6">POL</button>
      <Sep />
      <button className="w-7 pl-1 text-[#a9c6de]">3D</button>
    </footer>
  );
}

export default function App() {
  return (
    <div className="relative h-screen min-h-[600px] w-full overflow-hidden bg-black pt-[27px] pb-10 font-['DejaVu_Sans_Condensed','Open_Sans',sans-serif] text-[#3f3e4b]">
      <div className="flex h-full flex-col bg-[#f3f2f8]">
        <Tabs />
        <Ribbon />
        <div className="flex min-h-0 flex-1">
          <LeftPanel />
          <Viewport />
          <SideTabs />
        </div>
        <StatusBar />
      </div>
      <ContextMenu />
    </div>
  );
}
